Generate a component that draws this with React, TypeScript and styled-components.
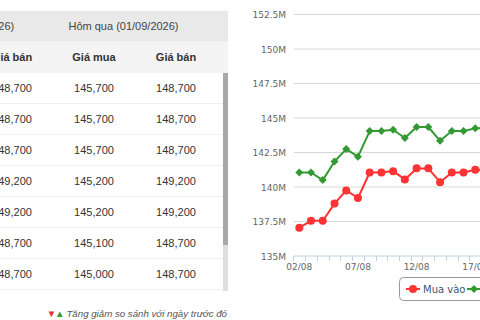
import * as React from 'react'
import styled, { createGlobalStyle } from 'styled-components'

const RED = '#ff3333'
const GREEN = '#339933'

// [hôm nay bán, hôm qua mua, hôm qua bán]
const rows = [
  ['148,700', '145,700', '148,700'],
  ['148,700', '145,700', '148,700'],
  ['148,700', '145,700', '148,700'],
  ['149,200', '145,200', '149,200'],
  ['149,200', '145,200', '149,200'],
  ['148,700', '145,100', '148,700'],
  ['148,700', '145,000', '148,700']
]

const buy = [
  137.05, 137.55, 137.55, 138.8, 139.75, 139.2, 141.05, 141.05, 141.15,
  140.55, 141.35, 141.35, 140.35, 141.05, 141.05, 141.25, 141.25
]
const sell = [
  141.05, 141.05, 140.5, 141.85, 142.75, 142.2, 144.05, 144.05, 144.15,
  143.55, 144.35, 144.35, 143.35, 144.05, 144.05, 144.25, 144.25
]

const yTicks = ['135M', '137.5M', '140M', '142.5M', '145M', '147.5M', '150M', '152.5M']
const xLabels: [number, string][] = [
  [0, '02/08'],
  [5, '07/08'],
  [10, '12/08'],
  [15, '17/08']
]

const yOf = (v: number) => 256 - ((v - 135) / 2.5) * 34.5
const xOf = (i: number) => 59.3 + i * 11.73

const GlobalStyle = createGlobalStyle`
  body {
    margin: 0;
    background: #fff;
    overflow: hidden;
    font-family: 'Liberation Sans', Arial, sans-serif;
  }
`

const Page = styled.div`
  display: flex;
  gap: 12px;
  width: 480px;
  height: 320px;
  overflow: hidden;
`

const TablePanel = styled.div`
  width: 228px;
  flex: none;
  padding-top: 11px;
  display: flex;
  flex-direction: column;
  overflow: hidden;

  & > * {
    flex: none;
  }
`

const GroupRow = styled.div`
  display: grid;
  grid-template-columns: 164px 164px 11px;
  margin-left: -111px;
  height: 30px;
  background: #e9e9e9;
  color: #444;
  font-size: 11px;
`

const GroupCell = styled.div`
  display: flex;
  align-items: center;
  justify-content: center;
  padding-right: 23px;
  white-space: nowrap;
`

const ColRow = styled.div`
  display: grid;
  grid-template-columns: repeat(3, 82px) 11px;
  margin-left: -29px;
  height: 32px;
  background: #f4f4f4;
  font-size: 11px;
  font-weight: bold;
  color: #333;
`

const Cell = styled.div`
  display: flex;
  align-items: center;
  justify-content: center;
  white-space: nowrap;
`

const Body = styled.div`
  display: flex;
  height: 218px;
`

const RowsClip = styled.div`
  flex: 1;
  overflow: hidden;
`

const Row = styled.div`
  display: grid;
  grid-template-columns: repeat(3, 82px);
  margin-left: -29px;
  height: 30px;
  border-bottom: 1px solid #eeeeee;
  font-size: 11px;
  color: #333;
`

const ScrollTrack = styled.div`
  width: 5px;
  flex: none;
  background: #dedede;
`

const ScrollThumb = styled.div`
  height: 172px;
  background: #a8a8a8;
`

const Note = styled.div`
  margin-top: 17px;
  padding-right: 1px;
  text-align: right;
  font-size: 9.7px;
  line-height: 12px;
  font-style: italic;
  color: #555;
  white-space: nowrap;
`

const Arrow = styled.span<{ $up?: boolean }>`
  font-style: normal;
  font-size: 9.5px;
  color: ${p => (p.$up ? '#2a9a2a' : '#e53030')};
  margin-right: ${p => (p.$up ? '2px' : '-1px')};
`

const ChartSvg = styled.svg`
  display: block;
  flex: none;
`

const AxisText = styled.text`
  font-family: 'DejaVu Sans', Verdana, sans-serif;
  font-size: 9px;
  fill: #666;
`

const LegendText = styled.text`
  font-family: 'DejaVu Sans', Verdana, sans-serif;
  font-size: 10px;
  fill: #3e576f;
`

const linePath = (vals: number[]) =>
  vals.map((v, i) => `${i ? 'L' : 'M'}${xOf(i).toFixed(1)},${yOf(v).toFixed(1)}`).join(' ')

const diamond = (x: number, y: number, r = 4) =>
  `M${x},${y - r} L${x + r},${y} L${x},${y + r} L${x - r},${y} Z`

function PriceChart() {
  return (
    <ChartSvg width={240} height={320} viewBox="0 0 240 320">
      {yTicks.map((t, i) => {
        const y = 256 - i * 34.5
        return (
          <g key={t}>
            {i > 0 && <line x1={54} x2={240} y1={y} y2={y} stroke="#d8d8d8" strokeWidth={1} />}
            <AxisText x={46} y={y + 3.5} textAnchor="end">
              {t}
            </AxisText>
          </g>
        )
      })}

      <line x1={54} x2={240} y1={256} y2={256} stroke="#c0d0e0" strokeWidth={1} />
      {Array.from({ length: 17 }, (_, i) => {
        const x = Math.round(xOf(i) - 5.87) + 0.5
        return <line key={i} x1={x} x2={x} y1={256} y2={261} stroke="#c0d0e0" strokeWidth={1} />
      })}
      {xLabels.map(([i, t]) => (
        <AxisText key={t} x={xOf(i)} y={270} textAnchor="middle">
          {t}
        </AxisText>
      ))}

      <path d={linePath(sell)} fill="none" stroke={GREEN} strokeWidth={2} strokeLinejoin="round" />
      {sell.map((v, i) => (
        <path key={i} d={diamond(xOf(i), yOf(v))} fill={GREEN} />
      ))}

      <path d={linePath(buy)} fill="none" stroke={RED} strokeWidth={2} strokeLinejoin="round" />
      {buy.map((v, i) => (
        <circle key={i} cx={xOf(i)} cy={yOf(v)} r={4} fill={RED} />
      ))}

      <rect x={159.5} y={277.5} width={170} height={23} rx={4} fill="#fff" stroke="#989898" />
      <line x1={166} x2={180} y1={289} y2={289} stroke={RED} strokeWidth={2} />
      <circle cx={173} cy={289} r={4} fill={RED} />
      <LegendText x={183} y={293}>
        Mua vào
      </LegendText>
      <line x1={227} x2={241} y1={289} y2={289} stroke={GREEN} strokeWidth={2} />
      <path d={diamond(234, 289)} fill={GREEN} />
    </ChartSvg>
  )
}

export default function App() {
  return (
    <>
      <GlobalStyle />
      <Page>
        <TablePanel>
          <GroupRow>
            <GroupCell>Hôm nay (02/09/2026)</GroupCell>
            <GroupCell>Hôm qua (01/09/2026)</GroupCell>
          </GroupRow>
          <ColRow>
            <Cell>Giá bán</Cell>
            <Cell>Giá mua</Cell>
            <Cell>Giá bán</Cell>
          </ColRow>
          <Body>
            <RowsClip>
              {rows.map((r, i) => (
                <Row key={i}>
                  {r.map((c, j) => (
                    <Cell key={j}>{c}</Cell>
                  ))}
                </Row>
              ))}
            </RowsClip>
            <ScrollTrack>
              <ScrollThumb />
            </ScrollTrack>
          </Body>
          <Note>
            <Arrow>▼</Arrow>
            <Arrow $up>▲</Arrow>
            Tăng giảm so sánh với ngày trước đó
          </Note>
        </TablePanel>
        <PriceChart />
      </Page>
    </>
  )
}
